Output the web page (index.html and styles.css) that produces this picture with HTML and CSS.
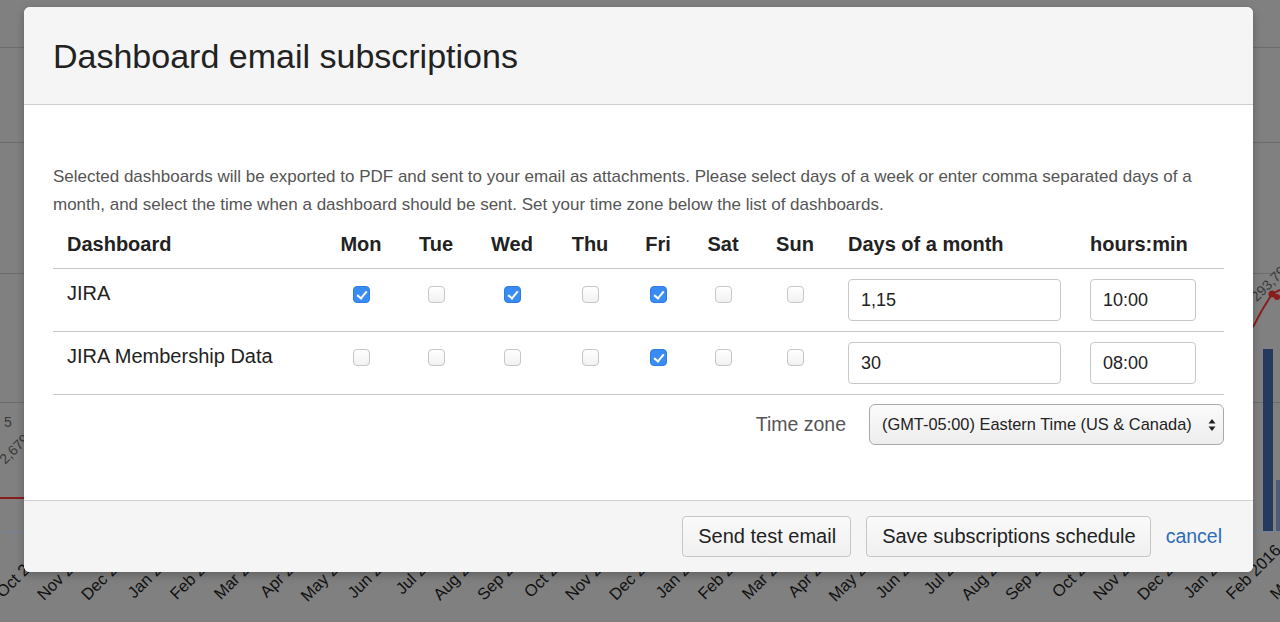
FILE: index.html
```html
<!DOCTYPE html>
<html>
<head>
<meta charset="utf-8">
<title>Dashboard email subscriptions</title>
<link rel="stylesheet" href="styles.css">
</head>
<body>
<svg class="chart" width="1280" height="622" viewBox="0 0 1280 622" xmlns="http://www.w3.org/2000/svg">
  <g stroke="#6c6c6c" stroke-width="1">
    <line x1="0" y1="47.5" x2="1280" y2="47.5"/>
    <line x1="0" y1="142.5" x2="1280" y2="142.5"/>
    <line x1="0" y1="273.5" x2="1280" y2="273.5"/>
    <line x1="0" y1="402.5" x2="1280" y2="402.5"/>
  </g>
  <line x1="0" y1="531.5" x2="1280" y2="531.5" stroke="#75829a" stroke-width="1"/>
  <line x1="14.5" y1="531" x2="14.5" y2="540" stroke="#75829a" stroke-width="1"/>
  <rect x="1263" y="349" width="10" height="182" fill="#243a5e"/>
  <rect x="1276" y="480" width="6" height="51" fill="#4b5b78"/>
  <path d="M1253 327 Q1262 309 1272 294 L1280 290" fill="none" stroke="#8a1c1c" stroke-width="2"/>
  <circle cx="1272" cy="294" r="3.5" fill="#8a1c1c"/>
  <circle cx="1277" cy="297" r="3" fill="#8a1c1c"/>
  <text x="1287" y="272" transform="rotate(-45 1287 272)" text-anchor="end" class="val">293,79</text>
  <line x1="0" y1="498" x2="24" y2="498" stroke="#8a1c1c" stroke-width="2"/>
  <text x="30" y="440" transform="rotate(-45 30 440)" text-anchor="end" class="val">2,679</text>
  <text x="4" y="427" class="val">5</text>
</svg>

<div class="axis">
  <span class="tick" style="right: 1234px">Oct 2013</span>
  <span class="tick" style="right: 1190px">Nov 2013</span>
  <span class="tick" style="right: 1146px">Dec 2013</span>
  <span class="tick" style="right: 1102px">Jan 2014</span>
  <span class="tick" style="right: 1058px">Feb 2014</span>
  <span class="tick" style="right: 1014px">Mar 2014</span>
  <span class="tick" style="right: 970px">Apr 2014</span>
  <span class="tick" style="right: 926px">May 2014</span>
  <span class="tick" style="right: 882px">Jun 2014</span>
  <span class="tick" style="right: 838px">Jul 2014</span>
  <span class="tick" style="right: 794px">Aug 2014</span>
  <span class="tick" style="right: 750px">Sep 2014</span>
  <span class="tick" style="right: 706px">Oct 2014</span>
  <span class="tick" style="right: 662px">Nov 2014</span>
  <span class="tick" style="right: 618px">Dec 2014</span>
  <span class="tick" style="right: 574px">Jan 2015</span>
  <span class="tick" style="right: 530px">Feb 2015</span>
  <span class="tick" style="right: 486px">Mar 2015</span>
  <span class="tick" style="right: 442px">Apr 2015</span>
  <span class="tick" style="right: 398px">May 2015</span>
  <span class="tick" style="right: 354px">Jun 2015</span>
  <span class="tick" style="right: 310px">Jul 2015</span>
  <span class="tick" style="right: 266px">Aug 2015</span>
  <span class="tick" style="right: 222px">Sep 2015</span>
  <span class="tick" style="right: 178px">Oct 2015</span>
  <span class="tick" style="right: 134px">Nov 2015</span>
  <span class="tick" style="right: 90px">Dec 2015</span>
  <span class="tick" style="right: 46px">Jan 2016</span>
  <span class="tick" style="right: 2px">Feb 2016</span>
  <span class="tick" style="right: -42px">Mar 2016</span>
</div>

<div class="modal">
  <div class="modal-header">
    <h1 class="modal-title">Dashboard email subscriptions</h1>
  </div>
  <div class="modal-body">
    <p class="intro">Selected dashboards will be exported to PDF and sent to your email as attachments. Please select days of a week or enter comma separated days of a month, and select the time when a dashboard should be sent. Set your time zone below the list of dashboards.</p>
    <table class="subs">
      <colgroup>
        <col class="c-name">
        <col class="c-mon"><col class="c-tue"><col class="c-wed"><col class="c-thu"><col class="c-fri"><col class="c-sat"><col class="c-sun">
        <col class="c-days"><col class="c-time">
      </colgroup>
      <thead>
        <tr>
          <th class="left">Dashboard</th>
          <th>Mon</th><th>Tue</th><th>Wed</th><th>Thu</th><th>Fri</th><th>Sat</th><th>Sun</th>
          <th class="left">Days of a month</th>
          <th class="left">hours:min</th>
        </tr>
      </thead>
      <tbody>
        <tr>
          <td class="name">JIRA</td>
          <td class="day"><input type="checkbox" checked></td>
          <td class="day"><input type="checkbox"></td>
          <td class="day"><input type="checkbox" checked></td>
          <td class="day"><input type="checkbox"></td>
          <td class="day"><input type="checkbox" checked></td>
          <td class="day"><input type="checkbox"></td>
          <td class="day"><input type="checkbox"></td>
          <td><input class="field days" type="text" value="1,15"></td>
          <td><input class="field time" type="text" value="10:00"></td>
        </tr>
        <tr>
          <td class="name">JIRA Membership Data</td>
          <td class="day"><input type="checkbox"></td>
          <td class="day"><input type="checkbox"></td>
          <td class="day"><input type="checkbox"></td>
          <td class="day"><input type="checkbox"></td>
          <td class="day"><input type="checkbox" checked></td>
          <td class="day"><input type="checkbox"></td>
          <td class="day"><input type="checkbox"></td>
          <td><input class="field days" type="text" value="30"></td>
          <td><input class="field time" type="text" value="08:00"></td>
        </tr>
      </tbody>
    </table>
    <div class="tz-row">
      <span class="tz-label">Time zone</span>
      <div class="select">
        <span class="select-text">(GMT-05:00) Eastern Time (US &amp; Canada)</span>
        <svg class="select-arrows" width="8" height="14" viewBox="0 0 8 14" xmlns="http://www.w3.org/2000/svg">
          <path d="M4 1 L7.5 5.5 H0.5 Z" fill="#222"/>
          <path d="M4 13 L7.5 8.5 H0.5 Z" fill="#222"/>
        </svg>
      </div>
    </div>
  </div>
  <div class="modal-footer">
    <button class="btn" type="button">Send test email</button>
    <button class="btn" type="button">Save subscriptions schedule</button>
    <a class="cancel" href="#">cancel</a>
  </div>
</div>
</body>
</html>
```

FILE: styles.css
```css
html, body {
  margin: 0;
  padding: 0;
}

body {
  width: 1280px;
  height: 622px;
  overflow: hidden;
  background: #808080;
  font-family: "Liberation Sans", Arial, sans-serif;
  color: #222;
  position: relative;
}

.chart {
  position: absolute;
  left: 0;
  top: 0;
  display: block;
}

.chart .val {
  font-family: "Liberation Sans", Arial, sans-serif;
  font-size: 14px;
  fill: #3a3a3a;
}

/* rotated month labels of the chart behind the dialog */
.axis {
  position: absolute;
  left: 0;
  top: 537px;
  width: 1280px;
  height: 20px;
}

.tick {
  position: absolute;
  top: 0;
  font-size: 16.5px;
  line-height: 20px;
  color: #111;
  white-space: nowrap;
  transform-origin: 100% 50%;
  transform: rotate(-45deg);
}

.modal {
  position: absolute;
  left: 24px;
  top: 7px;
  width: 1229px;
  background: #fff;
  border-radius: 6px;
  overflow: hidden;
  box-shadow: 0 3px 9px rgba(0, 0, 0, 0.25);
}

.modal-header {
  height: 97px;
  display: flex;
  align-items: center;
  padding: 0 29px;
  background: #f5f5f5;
  border-bottom: 1px solid #cfcfcf;
}

.modal-title {
  margin: 0;
  font-size: 34px;
  font-weight: normal;
  color: #222;
  line-height: 40px;
}

.modal-body {
  padding: 58px 29px 55px;
}

.intro {
  margin: 0;
  font-size: 17px;
  line-height: 28px;
  color: #555;
}

.subs {
  margin-top: 2px;
  width: 1171px;
  border-collapse: collapse;
  table-layout: fixed;
}

.c-name { width: 267px; }
.c-mon { width: 82px; }
.c-tue { width: 68px; }
.c-wed { width: 84px; }
.c-thu { width: 72px; }
.c-fri { width: 64px; }
.c-sat { width: 66px; }
.c-sun { width: 78px; }
.c-days { width: 242px; }
.c-time { width: 148px; }

.subs th {
  height: 47px;
  padding: 0;
  font-size: 20px;
  font-weight: bold;
  color: #222;
  text-align: center;
  vertical-align: middle;
  border-bottom: 1px solid #c8c8c8;
  white-space: nowrap;
}

.subs th.left {
  text-align: left;
  padding-left: 14px;
}

.subs td {
  padding: 10px 14px;
  vertical-align: top;
  border-bottom: 1px solid #c8c8c8;
  font-size: 20px;
  line-height: 29px;
  color: #222;
}

.subs td.day {
  padding-left: 0;
  padding-right: 0;
  text-align: center;
}

.subs td.name {
  white-space: nowrap;
}

.subs input[type="checkbox"] {
  -webkit-appearance: none;
  appearance: none;
  position: relative;
  display: inline-block;
  width: 17px;
  height: 17px;
  margin: 7px 0 0;
  border: 1px solid #c6c6c6;
  border-radius: 4px;
  background: linear-gradient(#ffffff, #f1f1f1);
  box-sizing: border-box;
  vertical-align: top;
}

.subs input[type="checkbox"]:checked {
  background: #3a8cf5;
  border-color: #2d7ce6;
}

.subs input[type="checkbox"]:checked::after {
  content: "";
  position: absolute;
  left: 5px;
  top: 1.5px;
  width: 4px;
  height: 8px;
  border-right: 2px solid #fff;
  border-bottom: 2px solid #fff;
  transform: rotate(40deg);
}

.field {
  display: block;
  box-sizing: border-box;
  height: 42px;
  margin: 0;
  padding: 0 12px;
  border: 1px solid #c8c8c8;
  border-radius: 4px;
  background: #fff;
  font-family: "Liberation Sans", Arial, sans-serif;
  font-size: 18px;
  color: #222;
  outline: none;
}

.field.days { width: 213px; }
.field.time { width: 106px; }

.tz-row {
  display: flex;
  justify-content: flex-end;
  align-items: center;
  gap: 23px;
  margin-top: 9px;
}

.tz-label {
  font-size: 19.5px;
  color: #555;
}

.select {
  box-sizing: border-box;
  width: 355px;
  height: 41px;
  display: flex;
  align-items: center;
  justify-content: space-between;
  padding: 0 7px 0 12px;
  border: 1px solid #a9a9a9;
  border-radius: 6px;
  background: linear-gradient(#fbfbfb, #ededed);
}

.select-text {
  font-size: 16.4px;
  color: #222;
  white-space: nowrap;
}

.select-arrows {
  display: block;
}

.modal-footer {
  display: flex;
  justify-content: flex-end;
  align-items: center;
  gap: 15px;
  padding: 15px 31px 15px;
  background: #f5f5f5;
  border-top: 1px solid #d2d2d2;
}

.btn {
  height: 41px;
  margin: 0;
  padding: 0 14px 0 15px;
  border: 1px solid #c6c6c6;
  border-radius: 4px;
  background: linear-gradient(#fafafa, #f0f0f0);
  font-family: "Liberation Sans", Arial, sans-serif;
  font-size: 20px;
  color: #222;
}

.cancel {
  font-size: 19.5px;
  color: #2f6cb6;
  text-decoration: none;
}
```
